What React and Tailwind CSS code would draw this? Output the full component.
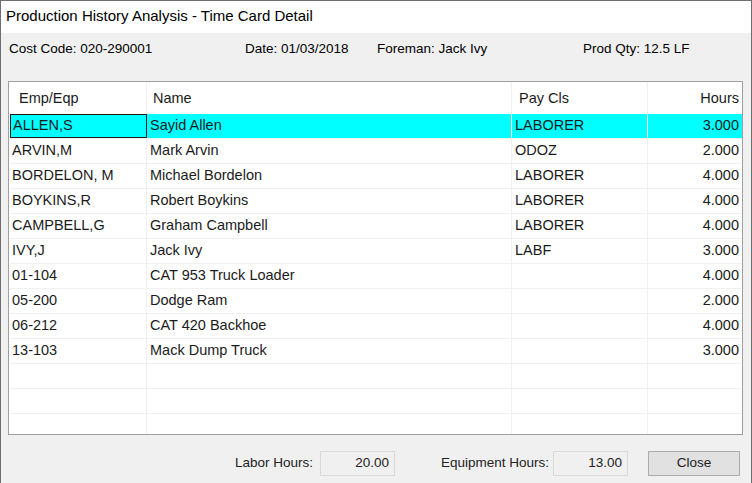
import React from "react";

const rows = [
  { id: "ALLEN,S", name: "Sayid Allen", cls: "LABORER", hrs: "3.000" },
  { id: "ARVIN,M", name: "Mark Arvin", cls: "ODOZ", hrs: "2.000" },
  { id: "BORDELON, M", name: "Michael Bordelon", cls: "LABORER", hrs: "4.000" },
  { id: "BOYKINS,R", name: "Robert Boykins", cls: "LABORER", hrs: "4.000" },
  { id: "CAMPBELL,G", name: "Graham Campbell", cls: "LABORER", hrs: "4.000" },
  { id: "IVY,J", name: "Jack Ivy", cls: "LABF", hrs: "3.000" },
  { id: "01-104", name: "CAT 953 Truck Loader", cls: "", hrs: "4.000" },
  { id: "05-200", name: "Dodge Ram", cls: "", hrs: "2.000" },
  { id: "06-212", name: "CAT 420 Backhoe", cls: "", hrs: "4.000" },
  { id: "13-103", name: "Mack Dump Truck", cls: "", hrs: "3.000" },
  { id: "", name: "", cls: "", hrs: "" },
  { id: "", name: "", cls: "", hrs: "" },
  { id: "", name: "", cls: "", hrs: "" },
];

const cols = "grid grid-cols-[137px_365px_136px_93px]";

export default function App() {
  return (
    <div className="w-[752px] h-[483px] overflow-hidden bg-[#f0f0f0] border border-[#6e6e6e] border-b-0 font-['Liberation_Sans',Arial,sans-serif] text-[#1b1b1b] flex flex-col">
      {/* title bar */}
      <div className="h-[32px] bg-white flex items-center pl-[5px] pb-[1px] text-[15px] text-black shrink-0">
        Production History Analysis - Time Card Detail
      </div>

      {/* info line */}
      <div className="h-[32px] flex items-center text-[13.5px] text-black shrink-0">
        <span className="ml-[8px] w-[236px]">Cost Code: 020-290001</span>
        <span className="w-[132px]">Date: 01/03/2018</span>
        <span className="w-[206px]">Foreman: Jack Ivy</span>
        <span>Prod Qty: 12.5 LF</span>
      </div>

      {/* table */}
      <div className="mt-[16px] ml-[7px] w-[735px] h-[354px] bg-white border border-[#a0a0a0] overflow-hidden shrink-0 pl-[1px]">
        <div className={`${cols} h-[32px] items-center text-[14.5px]`}>
          <div className="pl-[9px] pt-[2px] h-full flex items-center border-r border-[#f0f0f0]">Emp/Eqp</div>
          <div className="pl-[6px] pt-[2px] h-full flex items-center border-r border-[#f0f0f0]">Name</div>
          <div className="pl-[7px] pt-[2px] h-full flex items-center border-r border-[#f0f0f0]">Pay Cls</div>
          <div className="pr-[2px] pt-[2px] h-full flex items-center justify-end">Hours</div>
        </div>
        {rows.map((r, i) => {
          const sel = i === 0;
          return (
            <div
              key={i}
              className={`${cols} h-[25px] text-[14.5px] border-b border-[#f0f0f0] ${sel ? "bg-[#00ffff]" : ""}`}
            >
              <div
                className={`pl-[2px] h-full flex items-center ${
                  sel ? "border border-[#1b1b1b]" : "border-r border-[#f0f0f0]"
                }`}
              >
                {r.id}
              </div>
              <div className={`pl-[3px] h-full flex items-center ${sel ? "border-r border-white" : "border-r border-[#f0f0f0]"}`}>
                {r.name}
              </div>
              <div className={`pl-[3px] h-full flex items-center ${sel ? "border-r border-white" : "border-r border-[#f0f0f0]"}`}>
                {r.cls}
              </div>
              <div className="pr-[2px] h-full flex items-center justify-end">{r.hrs}</div>
            </div>
          );
        })}
      </div>

      {/* footer */}
      <div className="mt-[16px] flex items-center text-[13.5px] text-[#222]">
        <span className="ml-[234px] w-[85px]">Labor Hours:</span>
        <div className="w-[75px] h-[25px] border border-[#d9d9d9] bg-[#f0f0f0] flex items-center justify-end pr-[5px]">
          20.00
        </div>
        <span className="ml-[46px] w-[112px]">Equipment Hours:</span>
        <div className="w-[75px] h-[25px] border border-[#d9d9d9] bg-[#f0f0f0] flex items-center justify-end pr-[5px]">
          13.00
        </div>
        <button className="ml-[20px] w-[92px] h-[25px] border border-[#adadad] bg-[#e1e1e1] flex items-center justify-center">
          Close
        </button>
      </div>
    </div>
  );
}
